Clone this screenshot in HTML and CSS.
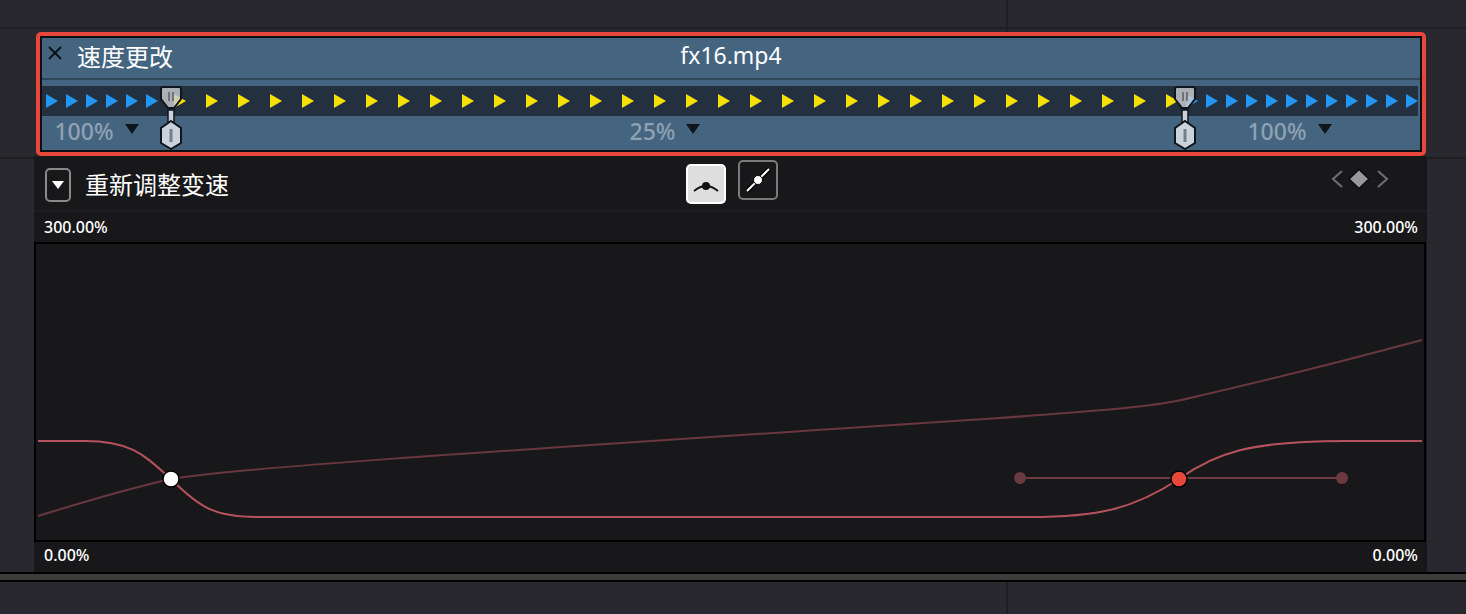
FILE: index.html
```html
<!DOCTYPE html>
<html lang="zh-CN">
	<head>
		<meta charset="UTF-8" />
		<meta name="viewport" content="width=device-width, initial-scale=1.0" />
		<title>速度更改</title>
		<link rel="stylesheet" href="styles.css">
	</head>
	<body>
		<div class="top-strip"><div class="strip-divider"></div></div>

		<div class="stage">
			<div class="editor">
				<div class="clip-panel">
					<div class="clip-inner">
						<div class="clip-header">
							<div class="clip-title">
								<svg class="close-icon" width="14" height="14" viewBox="0 0 14 14">
									<path d="M1 1L13 13M13 1L1 13" stroke="#0c0f13" stroke-width="1.8" fill="none" />
								</svg>
								<span>速度更改</span>
							</div>
							<div class="clip-name">fx16.mp4</div>
						</div>

						<svg class="track" width="1376" height="30" viewBox="0 0 1376 30">
							<defs>
								<pattern id="blueArrow" x="4" y="0" width="20" height="30" patternUnits="userSpaceOnUse">
									<path d="M0 8L12 15L0 22Z" fill="#2196f3" />
								</pattern>
								<pattern id="yellowArrow" x="4" y="0" width="32" height="30" patternUnits="userSpaceOnUse">
									<path d="M0 8L12 15L0 22Z" fill="#f7df0c" />
								</pattern>
							</defs>
							<rect width="1376" height="30" fill="#22303f" />
							<rect x="4" width="120" height="30" fill="url(#blueArrow)" />
							<rect x="132" width="1024" height="30" fill="url(#yellowArrow)" />
							<rect x="1144" width="232" height="30" fill="url(#blueArrow)" />
						</svg>

						<div class="speed-row">
							<div class="speed-seg seg-first"><span>100%</span><i class="caret"></i></div>
							<div class="speed-seg"><span>25%</span><i class="caret"></i></div>
							<div class="speed-seg"><span>100%</span><i class="caret"></i></div>
						</div>

						<svg class="handle handle-left" width="30" height="64" viewBox="0 0 30 64">
							<use href="#handleShape" />
						</svg>
						<svg class="handle handle-right" width="30" height="64" viewBox="0 0 30 64">
							<g id="handleShape">
								<path d="M12 24H18V38H12Z" fill="#c9d3dd" stroke="#10151b" stroke-width="1.5" />
								<path d="M5 3Q5 1 7 1H23Q25 1 25 3V13L18 22H12L5 13Z" fill="#c9ccd1" fill-opacity="0.82" stroke="#10151b" stroke-width="2" />
								<path d="M13 6V15M17 6V15" stroke="#6f7378" stroke-width="2" />
								<path d="M15 35L25 42V57L15 63L5 57V42Z" fill="#c9d3dd" stroke="#10151b" stroke-width="2" />
								<path d="M15 43V56" stroke="#777d84" stroke-width="3" />
							</g>
						</svg>
					</div>
				</div>

				<div class="retime-row">
					<div class="retime-left">
						<div class="toggle-box"><i class="toggle-caret"></i></div>
						<span class="retime-title">重新调整变速</span>
					</div>
					<div class="curve-btns">
						<button class="curve-btn curve-btn-active">
							<svg width="36" height="36" viewBox="0 0 36 36">
								<path d="M6 25Q12 20 18 20Q24 20 30 25" stroke="#111" stroke-width="1.8" fill="none" />
								<circle cx="18" cy="20" r="4" fill="#111" />
							</svg>
						</button>
						<button class="curve-btn curve-btn-linear">
							<svg width="36" height="36" viewBox="0 0 36 36">
								<path d="M7 29L29 7" stroke="#000" stroke-width="5" />
								<path d="M7 29L29 7" stroke="#fff" stroke-width="2" />
								<circle cx="18" cy="18" r="4.5" fill="#fff" stroke="#000" />
							</svg>
						</button>
					</div>
					<svg class="key-nav" width="60" height="22" viewBox="0 0 60 22">
						<path d="M12 3L3 11L12 19" stroke="#6c6c6e" stroke-width="2.2" fill="none" />
						<path d="M29 1.5L39 11L29 20.5L19 11Z" fill="#98989c" stroke="#0c0c0c" stroke-width="1.5" />
						<path d="M48 3L57 11L48 19" stroke="#6c6c6e" stroke-width="2.2" fill="none" />
					</svg>
				</div>

				<div class="scale-row"><span>300.00%</span><span>300.00%</span></div>

				<div class="graph">
					<svg class="graph-svg" width="1388" height="296" viewBox="36 244 1388 296">
						<!-- position curve -->
						<path d="M38 516C90 500 135 487 171 479C240 468 420 456 1000 418C1090 411 1150 408 1190 398C1260 382 1340 362 1422 340" stroke="#68383e" stroke-width="2" fill="none" />
						<!-- speed curve -->
						<path d="M38 441H85C132 441 145 456 171 479C200 508 215 517 258 517H1020C1100 518 1135 508 1179 479C1215 453 1250 441 1345 441H1422" stroke="#b5525e" stroke-width="2" fill="none" />
						<path d="M1020 478H1342" stroke="#6e3b40" stroke-width="2" />
						<circle cx="1020" cy="478" r="6" fill="#6b3a40" />
						<circle cx="1342" cy="478" r="6" fill="#6b3a40" />
						<circle cx="171" cy="479" r="8" fill="#fff" stroke="#000" stroke-width="1.5" />
						<circle cx="1179" cy="479" r="8" fill="#e8483c" stroke="#000" stroke-width="1.5" />
					</svg>
				</div>

				<div class="scale-row scale-row-bottom"><span>0.00%</span><span>0.00%</span></div>
			</div>
		</div>

		<div class="splitter"></div>
		<div class="bottom-strip"><div class="strip-divider"></div></div>
	</body>
</html>
```

FILE: styles.css
```css
* {
	box-sizing: border-box;
}

body {
	margin: 0;
	height: 614px;
	overflow: hidden;
	background: #28282e;
	color: #fff;
	font-family: "Noto Sans", "Noto Sans CJK SC", sans-serif;
}

.top-strip {
	height: 32px;
	background: linear-gradient(#1f1f23, #1f1f23) 0 27px / 100% 2px no-repeat;
}

.strip-divider {
	width: 2px;
	height: 100%;
	margin-left: 1006px;
	background: #1f1f23;
}

.stage {
	height: 540px;
	padding-left: 34px;
	background: linear-gradient(#1e1e20, #1e1e20) 0 125px / 100% 2px no-repeat;
}

.editor {
	width: 1393px;
	height: 100%;
	background: linear-gradient(#18181a, #18181a) 0 124px no-repeat;
}

.clip-panel {
	width: 1390px;
	height: 124px;
	margin-left: 2px;
	border: 4px solid #e8483c;
	border-radius: 5px;
}

.clip-inner {
	position: relative;
	height: 100%;
	border: 2px solid #0c0f13;
	background: #44647f;
}

.clip-header {
	position: relative;
	height: 42px;
	border-bottom: 2px solid #2f4659;
	display: grid;
	grid-template-columns: 1fr auto 1fr;
}

.clip-title {
	grid-column: 1;
	display: flex;
	font-size: 24px;
	line-height: 38px;
}

.clip-title span {
	margin-left: 15px;
}

.close-icon {
	margin: 8px 0 0 6px;
}

.clip-name {
	grid-column: 2;
	font-size: 23px;
	line-height: 34px;
}

.track {
	display: block;
	margin-top: 6px;
}

.speed-row {
	display: grid;
	grid-template-columns: 129px 1014px 1fr;
	height: 34px;
	color: #8fa2b4;
	font-size: 23px;
	font-weight: 500;
}

.speed-seg {
	display: flex;
	justify-content: center;
	gap: 11px;
	padding-right: 26px;
	line-height: 31px;
}

.seg-first {
	padding-right: 20px;
}

.caret {
	width: 0;
	height: 0;
	margin-top: 8px;
	border-left: 7px solid transparent;
	border-right: 7px solid transparent;
	border-top: 10px solid #10151b;
}

.handle {
	position: absolute;
	top: 48px;
}

.handle-left {
	left: 114px;
}

.handle-right {
	left: 1128px;
}

.retime-row {
	display: flex;
	height: 56px;
	border-bottom: 2px solid #1f1f21;
}

.retime-left {
	display: flex;
	width: 652px;
	padding: 12px 0 0 11px;
}

.toggle-box {
	width: 26px;
	height: 34px;
	border: 2px solid #8a8a8a;
	border-radius: 5px;
	display: flex;
	align-items: center;
	justify-content: center;
}

.toggle-caret {
	width: 0;
	height: 0;
	border-left: 6px solid transparent;
	border-right: 6px solid transparent;
	border-top: 8px solid #fff;
}

.retime-title {
	margin-left: 14px;
	font-size: 24px;
	line-height: 34px;
}

.curve-btns {
	display: flex;
	gap: 12px;
	align-items: flex-start;
}

.curve-btn {
	width: 40px;
	height: 40px;
	padding: 0;
	border-radius: 5px;
	display: flex;
	align-items: center;
	justify-content: center;
}

.curve-btn-active {
	margin-top: 8px;
	background: #dedede;
	border: 2px solid #fff;
}

.curve-btn-linear {
	margin-top: 4px;
	background: #18181a;
	border: 2px solid #7a7a7a;
}

.key-nav {
	margin: 12px 37px 0 auto;
}

.scale-row {
	display: flex;
	justify-content: space-between;
	height: 30px;
	padding: 0 9px 0 10px;
	font-size: 16px;
	font-weight: 500;
	line-height: 30px;
}

.scale-row-bottom {
	line-height: 26px;
}

.graph {
	width: 1392px;
	height: 300px;
	border: 2px solid #000;
	background: #18181a;
}

.graph-svg {
	display: block;
}

.splitter {
	height: 10px;
	background: #3c3c3c;
	border-top: 2px solid #000;
	border-bottom: 2px solid #000;
}

.bottom-strip {
	height: 32px;
}
```
